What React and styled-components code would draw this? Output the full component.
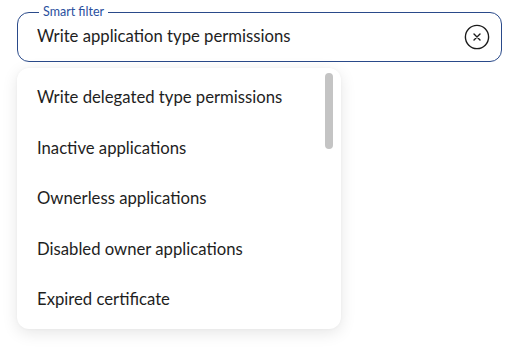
import React, { useState } from "react";
import styled, { createGlobalStyle } from "styled-components";

const GlobalStyle = createGlobalStyle`
  html, body {
    margin: 0;
    padding: 0;
    background: #ffffff;
    font-family: "Segoe UI", Lato, "Noto Sans", sans-serif;
  }
`;

const options = [
  "Write delegated type permissions",
  "Inactive applications",
  "Ownerless applications",
  "Disabled owner applications",
  "Expired certificate",
];

const App = () => {
  const [value, setValue] = useState("Write application type permissions");

  return (
    <>
      <GlobalStyle />
      <Page>
        <Field>
          <Legend>Smart filter</Legend>
          <Input value={value} onChange={(e) => setValue(e.target.value)} />
          <ClearButton onClick={() => setValue("")} aria-label="Clear">
            <svg width="26" height="26" viewBox="0 0 26 26" fill="none">
              <circle cx="13" cy="13" r="11.6" stroke="#1b1b1b" strokeWidth="1.4" />
              <path d="M10 10l6 6M16 10l-6 6" stroke="#1b1b1b" strokeWidth="1.4" strokeLinecap="round" />
            </svg>
          </ClearButton>
        </Field>
        <Dropdown>
          <List>
            {options.map((o) => (
              <Item key={o}>{o}</Item>
            ))}
          </List>
          <Scrollbar />
        </Dropdown>
      </Page>
    </>
  );
};

const Page = styled.div`
  padding: 12px 10px 0 17px;
  width: 512px;
  height: 351px;
  box-sizing: border-box;
`;

const Field = styled.fieldset`
  position: relative;
  margin: 0;
  width: 485px;
  height: 50px;
  box-sizing: border-box;
  border: 1px solid #2a4a8a;
  border-radius: 12px;
  padding: 0 11px 0 19px;
  display: flex;
  align-items: center;
`;

const Legend = styled.span`
  position: absolute;
  top: -9px;
  left: 21px;
  padding: 0 4px;
  background: #ffffff;
  font-size: 12.5px;
  line-height: 16px;
  color: #2a4f9e;
`;

const Input = styled.input`
  flex: 1;
  border: none;
  outline: none;
  background: transparent;
  font-family: "Segoe UI", Lato, "Noto Sans", sans-serif;
  font-size: 16.7px;
  color: #1e1e1e;
  padding: 0;
  margin-top: -2px;
`;

const ClearButton = styled.button`
  display: flex;
  border: none;
  background: transparent;
  padding: 0;
  cursor: pointer;
`;

const Dropdown = styled.div`
  position: relative;
  margin-top: 6px;
  width: 324px;
  height: 261px;
  background: #ffffff;
  border-radius: 12px;
  box-shadow: 0 4px 16px rgba(0, 0, 0, 0.1), 0 0 3px rgba(0, 0, 0, 0.04);
  overflow: hidden;
`;

const List = styled.ul`
  list-style: none;
  margin: 0;
  padding: 4px 0 0 0;
`;

const Item = styled.li`
  height: 50.5px;
  display: flex;
  align-items: center;
  padding-left: 20px;
  font-size: 16.7px;
  color: #1e1e1e;
  cursor: pointer;
`;

const Scrollbar = styled.div`
  position: absolute;
  top: 5px;
  right: 8px;
  width: 8px;
  height: 76px;
  border-radius: 4px;
  background: #c4c4c4;
`;

export default App;
